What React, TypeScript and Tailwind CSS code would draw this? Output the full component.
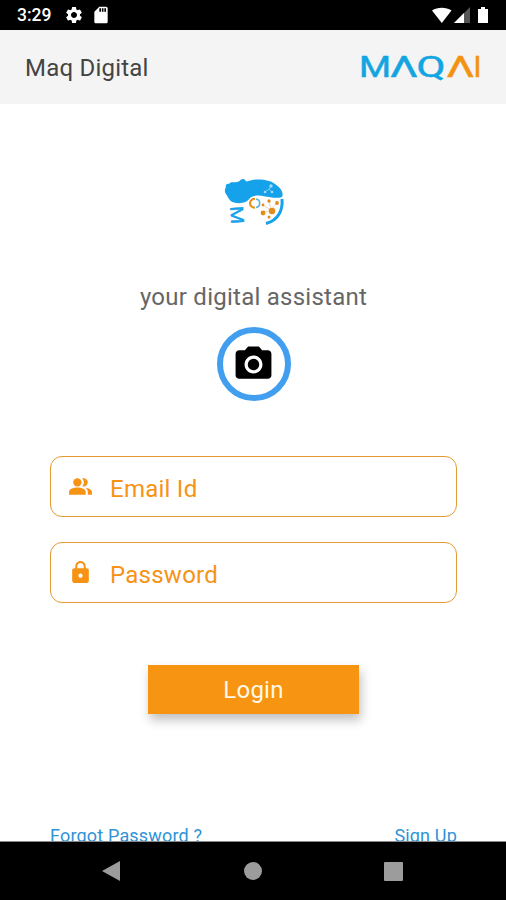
import React, { useState } from 'react';
import { MdLock, MdPhotoCamera, MdSdCard, MdSettings } from 'react-icons/md';

const StatusBar: React.FC = () => (
  <div className="flex h-[30px] shrink-0 items-center justify-between bg-black pr-[17px] pl-[17px] text-white">
    <div className="flex items-center">
      <span className="w-[47px] pt-px text-[17.5px] leading-none font-medium">3:29</span>
      <MdSettings className="size-5" />
      <MdSdCard className="ml-[7px] size-5" />
    </div>
    <svg width="57" height="18" viewBox="0 0 57 18" fill="currentColor">
      <path d="M0 4.5C5.5 .7 14 .7 19.5 4.5L9.8 17Z" />
      <path d="M38 1V17H22Z" fill="#555" />
      <path d="M32 7V17H22Z" />
      <path d="M46 3h3V1h4v2h3v14H46Z" />
    </svg>
  </div>
);

const Wordmark: React.FC = () => (
  <svg
    width="120"
    height="28"
    viewBox="0 0 120 28"
    className="overflow-visible"
    fontFamily="Roboto, sans-serif"
    fontSize="29"
    fill="#12a5e2"
    stroke="#12a5e2"
    strokeWidth=".5"
  >
    <text x="-2" y="24" textLength="32" lengthAdjust="spacingAndGlyphs">M</text>
    <text x="29" y="24" textLength="28" lengthAdjust="spacingAndGlyphs">Λ</text>
    <text x="55.5" y="24" textLength="29" lengthAdjust="spacingAndGlyphs">Q</text>
    <g fill="#f39212" stroke="#f39212">
      <text x="85.500" y="24" textLength="28" lengthAdjust="spacingAndGlyphs">Λ</text>
      <text x="112.500" y="24">I</text>
    </g>
  </svg>
);

const HeadLogo: React.FC = () => (
  <svg width="62" height="50" viewBox="0 0 62 50" fill="none">
    <path
      d="M3 9C2 7 4 5 6 6C8 3 11 5 14 4C17 4 17 1 20 1C22 1 22 3 24 3.500C33 0 46 1 52 6C58 10 61 15 59 19C54 21 46 19 42 18.500C37 17 30 17 27 20C24 25 17 26 11 24.500C7 24 5 19 3 16C1 13 2 11 3 9Z"
      fill="#16a1eb"
    />
    <path d="M59 21C60 31 56 42 43 45.500" stroke="#16a1eb" strokeWidth="3" />
    <path d="M32 21A4.300 4.300 0 1 0 32 29.500" stroke="#e5931f" strokeWidth="2.200" />
    <path d="M33 21A4.300 4.300 0 0 1 33 29.500" stroke="#57b6e5" strokeWidth="1.600" />
    <path d="M40 27L48 32L54 25M46 23L48 32L40 35" stroke="#e7cfaa" strokeWidth=".8" />
    <g fill="#e38c1b">
      <circle cx="46" cy="23" r="1.700" />
      <circle cx="40" cy="27" r="1.400" />
      <circle cx="54" cy="25" r="1.900" />
      <circle cx="49" cy="33" r="3.200" />
      <circle cx="40" cy="35" r="2.400" />
      <circle cx="46" cy="39" r="1.500" />
    </g>
    <path d="M42 14L46 11L48 8M46 11L49 14" stroke="#7fc7ef" strokeWidth="1" />
    <g fill="#a9daf4">
      <circle cx="42" cy="14" r="1.300" />
      <circle cx="48" cy="8" r="1.700" />
      <circle cx="49" cy="14" r="1.300" />
    </g>
    <text
      transform="translate(7 28.500) rotate(86)"
      fontFamily="Roboto, sans-serif"
      fontSize="18"
      fill="#16a1eb"
      stroke="#16a1eb"
      strokeWidth=".4"
      textLength="18"
      lengthAdjust="spacingAndGlyphs"
    >
      M
    </text>
  </svg>
);

const UsersIcon: React.FC = () => (
  <svg width="25" height="25" viewBox="0 0 24 24" fill="currentColor">
    <circle cx="9" cy="8" r="4" />
    <path d="M9 13c-2.700 0-8 1.300-8 4v3h16v-3c0-2.700-5.300-4-8-4Z" />
    <path d="M15 12a4 4 0 0 0 0-8c-.5 0-.9.1-1.300.2a6 6 0 0 1 0 7.600c.4.1.8.2 1.300.2Z" />
    <path d="M16.700 13.100C18 14 19 15.300 19 17v3h4v-3c0-2.200-3.500-3.500-6.300-3.900Z" />
  </svg>
);

interface FieldProps {
  icon: React.ReactNode;
  type: string;
  placeholder: string;
  value: string;
  onChange: (value: string) => void;
}

const Field: React.FC<FieldProps> = ({ icon, type, placeholder, value, onChange }) => (
  <label className="flex h-[61px] items-center rounded-xl border border-[#e59a31] pl-[17px] text-[#f69315]">
    {icon}
    <input
      type={type}
      placeholder={placeholder}
      value={value}
      onChange={(e) => onChange(e.target.value)}
      className="ml-[17px] min-w-0 flex-1 pt-1 text-2xl tracking-[0.25px] outline-none placeholder:text-[#f69315]"
    />
  </label>
);

const NavBar: React.FC = () => (
  <div className="flex h-[58px] shrink-0 items-center justify-between bg-black pr-[103px] pl-[101px] text-[#9c9c9c]">
    <svg width="20" height="20" viewBox="0 0 20 20" fill="currentColor">
      <path d="M19 0V20L1 10Z" />
    </svg>
    <div className="size-[18px] rounded-full bg-[#9c9c9c]" />
    <div className="size-[19px] rounded-[1px] bg-[#9c9c9c]" />
  </div>
);

export default function App() {
  const [email, setEmail] = useState('');
  const [password, setPassword] = useState('');

  return (
    <div className="flex h-[900px] w-[506px] flex-col overflow-hidden bg-white font-[Roboto,sans-serif]">
      <StatusBar />

      <header className="flex h-[74px] shrink-0 items-center justify-between bg-[#f4f4f4] pr-[25px] pl-[25px]">
        <h1 className="pt-px text-2xl tracking-[0.22px] text-[#444]">Maq Digital</h1>
        <Wordmark />
      </header>

      <main className="flex min-h-0 flex-1 flex-col overflow-hidden border-b border-[#888] pt-[74px] pr-[49px] pl-[50px]">
        <div className="flex flex-col items-center">
          <HeadLogo />
          <p className="mt-[53px] text-2xl tracking-[0.25px] text-[#666]">your digital assistant</p>
          <button className="mt-[14px] flex size-[74px] items-center justify-center rounded-full border-[6px] border-[#429eee] text-black">
            <MdPhotoCamera className="size-[43px]" />
          </button>
        </div>

        <form className="mt-[55px] flex flex-col gap-[25px]" onSubmit={(e) => e.preventDefault()}>
          <Field
            icon={<UsersIcon />}
            type="text"
            placeholder="Email Id"
            value={email}
            onChange={setEmail}
          />
          <Field
            icon={<MdLock className="size-[25px]" />}
            type="password"
            placeholder="Password"
            value={password}
            onChange={setPassword}
          />
          <button
            type="submit"
            className="mt-[37px] h-[49px] w-[211px] self-center bg-[#f79411] pt-px text-2xl tracking-[0.25px] text-[#fff8e8] shadow-[2px_6px_10px_rgba(0,0,0,0.25)]"
          >
            Login
          </button>
        </form>

        <div className="mt-[108px] flex shrink-0 justify-between text-lg tracking-[0.18px] text-[#2f93d6]">
          <a href="#forgot">Forgot Password ?</a>
          <a href="#signup">Sign Up</a>
        </div>
      </main>

      <NavBar />
    </div>
  );
}
